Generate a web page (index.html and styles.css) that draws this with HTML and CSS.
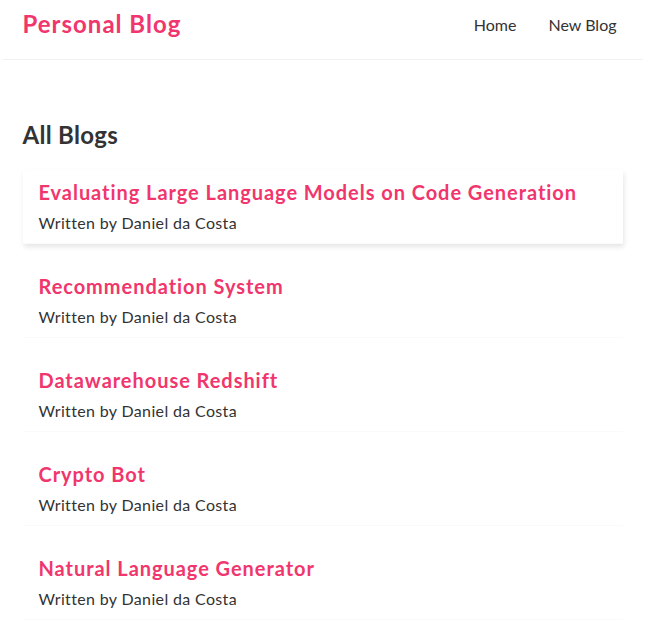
FILE: index.html
```html
<!DOCTYPE html>
<html lang="en">
<head>
<meta charset="utf-8">
<title>Personal Blog</title>
<link rel="stylesheet" href="styles.css">
</head>
<body>
<div class="app">
  <nav class="navbar">
    <h1 class="brand">Personal Blog</h1>
    <div class="links">
      <a href="#" class="link">Home</a>
      <a href="#" class="link">New Blog</a>
    </div>
  </nav>
  <main class="content">
    <h2 class="section-title">All Blogs</h2>
    <div class="blog-preview is-hover">
      <h2 class="blog-title">Evaluating Large Language Models on Code Generation</h2>
      <p class="blog-author">Written by Daniel da Costa</p>
    </div>
    <div class="blog-preview">
      <h2 class="blog-title">Recommendation System</h2>
      <p class="blog-author">Written by Daniel da Costa</p>
    </div>
    <div class="blog-preview">
      <h2 class="blog-title">Datawarehouse Redshift</h2>
      <p class="blog-author">Written by Daniel da Costa</p>
    </div>
    <div class="blog-preview">
      <h2 class="blog-title">Crypto Bot</h2>
      <p class="blog-author">Written by Daniel da Costa</p>
    </div>
    <div class="blog-preview">
      <h2 class="blog-title">Natural Language Generator</h2>
      <p class="blog-author">Written by Daniel da Costa</p>
    </div>
  </main>
</div>
</body>
</html>
```
FILE: styles.css
```css
* {
  margin: 0;
  font-family: "Lato", "Noto Sans", sans-serif;
  color: #333;
}
body {
  margin: 0;
  background: #fff;
}
.app {
  width: 645px;
}
.navbar {
  padding: 9px 20px 20px;
  display: flex;
  align-items: center;
  max-width: 600px;
  margin: 0 auto;
  border-bottom: 1px solid #f2f2f2;
}
.brand {
  font-size: 24px;
  line-height: 30px;
  font-weight: 700;
  letter-spacing: 1px;
  color: #f1356d;
}
.links {
  margin-left: auto;
}
.link {
  margin-left: 16px;
  text-decoration: none;
  padding: 6px;
  font-size: 16px;
  font-weight: 400;
}
.content {
  max-width: 600px;
  margin: 40px auto;
  padding: 20px;
}
.section-title {
  font-size: 24px;
  line-height: 30px;
  font-weight: 700;
  letter-spacing: 0.3px;
}
.blog-preview {
  padding: 10px 16px;
  margin: 20px 0;
  border-bottom: 1px solid #fafafa;
}
.blog-preview.is-hover {
  box-shadow: 1px 3px 5px rgba(0, 0, 0, 0.1);
}
.blog-title {
  font-size: 20px;
  line-height: 25px;
  font-weight: 700;
  letter-spacing: 0.95px;
  color: #f1356d;
  margin-bottom: 8px;
}
.blog-author {
  font-size: 16px;
  line-height: 20px;
  font-weight: 400;
  letter-spacing: 0.35px;
}
```
